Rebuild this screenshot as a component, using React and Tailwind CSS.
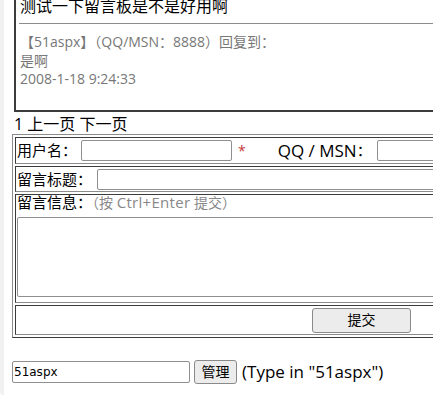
export default function App() {
  const font = "font-['Open_Sans','Noto_Sans_CJK_SC',sans-serif]";
  const cell = "border border-t-[#3c3c3c] border-l-[#3c3c3c] border-b-[#8c8c8c] border-r-[#8c8c8c]";
  return (
    <div className={`flex w-[433px] h-[399px] overflow-hidden bg-white text-black ${font}`}>
      <div className="w-[4px] h-[395px] shrink-0 bg-[#f1f1f1] rounded-bl-[3px]" />
      <div className="flex flex-col w-[429px] shrink-0 overflow-hidden">
        {/* message box */}
        <div className="ml-[10px] mt-[-4px] h-[116px] w-[440px] shrink-0 border-l-2 border-b-2 border-[#3c3c3c] pl-[3px]">
          <div className="pl-[1px] text-[16px] leading-[20px] whitespace-nowrap">测试一下留言板是不是好用啊</div>
          <div className="mt-[7px] h-px bg-[#8c8c8c]" />
          <div className="mt-[9px] pl-[1px] text-[14px] leading-[18.5px] text-[#777777]">
            <div className="whitespace-nowrap">【51aspx】（QQ/MSN：8888）回复到：</div>
            <div>是啊</div>
            <div>2008-1-18 9:24:33</div>
          </div>
        </div>

        {/* pager */}
        <div className="ml-[10px] mt-[2px] text-[16px] leading-[20px] whitespace-nowrap">1 上一页 下一页</div>

        {/* form table */}
        <div className="ml-[8px] w-[440px] shrink-0 flex flex-col gap-[2px] p-[2px] border border-t-[#8c8c8c] border-l-[#8c8c8c] border-b-[#3c3c3c] border-r-[#3c3c3c]">
          <div className={`h-[27px] flex items-center ${cell} pl-[1px] text-[15px] whitespace-nowrap`}>
            <span className="shrink-0">用户名：</span>
            <div className="shrink-0 ml-[4px] w-[151px] h-[21px] border border-[#8f8f8f] rounded-[2px] bg-white" />
            <span className="shrink-0 ml-[6px] text-[14px] text-[#c83a3a]">*</span>
            <span className="shrink-0 ml-[32px] text-[17px] leading-[20px]">QQ / MSN</span>
            <span className="shrink-0">：</span>
            <div className="shrink-0 ml-[5px] w-[80px] h-[21px] border border-[#8f8f8f] rounded-[2px] bg-white" />
          </div>
          <div className={`h-[26px] flex items-center ${cell} pl-[1px] text-[15px] whitespace-nowrap`}>
            <span className="shrink-0">留言标题：</span>
            <div className="shrink-0 ml-[5px] w-[400px] h-[21px] border border-[#8f8f8f] rounded-[2px] bg-white" />
          </div>
          <div className={`h-[109px] flex flex-col ${cell} pl-[1px]`}>
            <div className="text-[15px] leading-[15px] whitespace-nowrap">
              留言信息：<span className="text-[14px] text-[#888888]">（按 <span className="text-[15px] tracking-[0.3px]">Ctrl+Enter</span> 提交）</span>
            </div>
            <div className="mt-[7px] w-[430px] h-[80px] border border-[#8f8f8f] rounded-[2px] bg-white" />
          </div>
          <div className={`h-[30px] flex items-center ${cell}`}>
            <button className="shrink-0 ml-[296px] w-[99px] h-[25px] border border-[#8a8a8a] rounded-[3px] bg-[#ececec] text-[14px] leading-[20px]">提交</button>
          </div>
        </div>

        {/* admin */}
        <div className="ml-[8px] mt-[22px] flex items-center whitespace-nowrap">
          <div className="shrink-0 w-[178px] h-[22px] flex items-center border border-[#8f8f8f] rounded-[2px] pl-[1px] text-[12px] font-['DejaVu_Sans',sans-serif]">51aspx</div>
          <button className="shrink-0 ml-[4px] w-[43px] h-[24px] border border-[#8a8a8a] rounded-[3px] bg-[#ececec] text-[14px] leading-[20px]">管理</button>
          <span className="shrink-0 ml-[5px] text-[17px] leading-[22px]">(Type in "51aspx")</span>
        </div>
      </div>
    </div>
  );
}
